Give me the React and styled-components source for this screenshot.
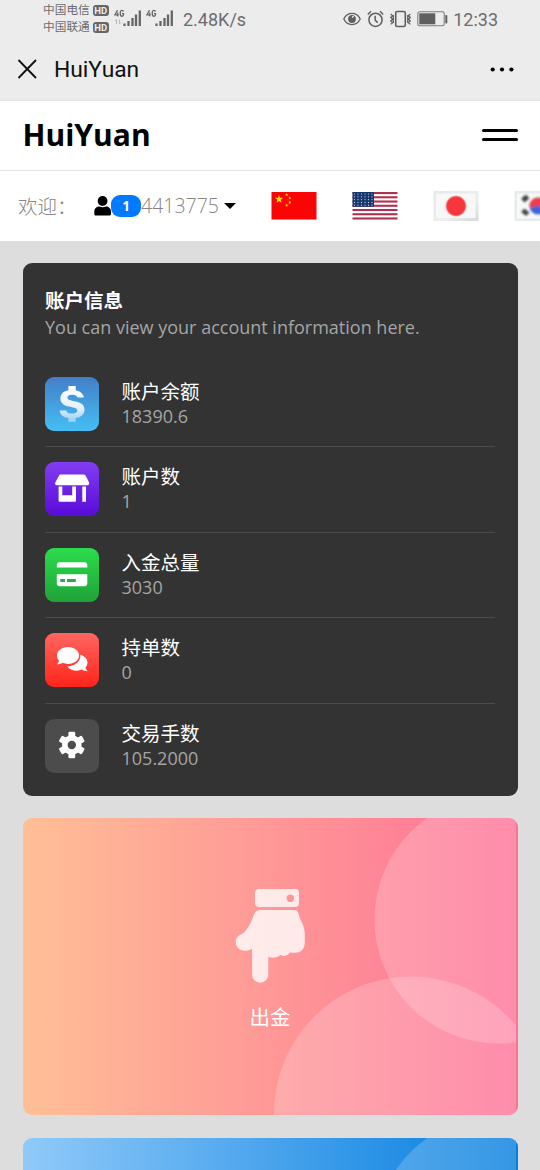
import React from 'react';
import styled, { createGlobalStyle } from 'styled-components';

const GlobalStyle = createGlobalStyle`
  * { box-sizing: border-box; }
  html, body { margin: 0; background: #ddd; }
  body {
    height: 1170px;
    overflow: hidden;
    font-family: "Noto Sans", "Open Sans", "Noto Sans CJK SC", sans-serif;
  }
  svg { display: block; flex: none; }
`;

const Page = styled.div`
  width: 540px;
  height: 1170px;
  overflow: hidden;
  background: #ddd;
`;

const StatusBar = styled.div`
  display: flex;
  align-items: center;
  height: 37px;
  padding: 1px 42px 0 43px;
  background: #ececec;
  color: #6c6c6c;
  font-family: Roboto, "Noto Sans CJK SC", sans-serif;
`;

const Carriers = styled.div`
  display: flex;
  flex-direction: column;
  width: 70px;
`;

const Carrier = styled.div`
  display: flex;
  align-items: center;
  gap: 3px;
  height: 17.5px;
  font-size: 11.7px;
  line-height: 17px;
  white-space: nowrap;
`;

const HdTag = styled.span`
  width: 16px;
  height: 11px;
  border-radius: 3px;
  background: #666;
  color: #ececec;
  font-size: 9.5px;
  font-weight: 700;
  line-height: 11px;
  text-align: center;
`;

const Signals = styled.div`
  display: flex;
  gap: 4px;
  margin-left: 1px;
`;

const Speed = styled.span`
  margin-left: 9px;
  font-size: 18px;
`;

const StatusRight = styled.div`
  display: flex;
  align-items: center;
  gap: 6px;
  margin-left: auto;
`;

const Clock = styled.span`
  margin-left: -1px;
  font-size: 18px;
`;

const TitleBar = styled.div`
  display: flex;
  align-items: center;
  height: 64px;
  padding: 2px 26px 0 17px;
  border-bottom: 1px solid #e6e6e6;
  background: #ececec;
  color: #111;
`;

const Title = styled.div`
  flex: 1;
  margin: 1px 0 0 16px;
  font: 400 22.8px/30px Roboto, sans-serif;
`;

const Header = styled.header`
  display: flex;
  align-items: center;
  justify-content: space-between;
  height: 70px;
  padding: 0 22.5px 2px 22.5px;
  border-bottom: 1.5px solid #e4e4e4;
  background: #fff;
`;

const Brand = styled.h1`
  margin: 0;
  color: #000;
  font: 700 30px/40px "Open Sans", "Noto Sans", sans-serif;
`;

const Burger = styled.div`
  display: flex;
  flex-direction: column;
  gap: 6px;
  width: 36px;
`;

const BurgerLine = styled.span`
  height: 3px;
  border-radius: 2px;
  background: #000;
`;

const WelcomeBar = styled.div`
  display: flex;
  align-items: center;
  height: 69.5px;
  padding-left: 18px;
  overflow: hidden;
  background: #fff;
`;

const Welcome = styled.span`
  width: 76px;
  flex: none;
  padding-top: 2px;
  color: #858585;
  font-size: 19.5px;
  font-weight: 300;
  line-height: 28px;
`;

const Badge = styled.span`
  display: block;
  flex: none;
  width: 30px;
  height: 22px;
  border-radius: 9px;
  background: #007bff;
  color: #fff;
  font: 700 13.5px/22px "Open Sans", sans-serif;
  text-align: center;
`;

const AccountId = styled.span`
  color: #858585;
  font-family: "Open Sans", sans-serif;
  font-size: 19.5px;
  font-weight: 300;
  line-height: 28px;
  width: 78px;
`;

const Caret = styled.span`
  margin-left: 5px;
  border: 6px solid transparent;
  border-top-color: #000;
  border-bottom: 0;
`;

const Flags = styled.div`
  display: flex;
  align-items: center;
  gap: 35px;
  margin-left: 35px;
`;

const Main = styled.main`
  display: flex;
  flex-direction: column;
  gap: 22.5px;
  padding: 22.5px;
`;

const InfoCard = styled.section`
  flex: none;
  height: 532.5px;
  padding: 24px 22.5px 0;
  border-radius: 9px;
  background: #333;
`;

const CardTitle = styled.h2`
  margin: 0;
  color: #fff;
  font-size: 19.5px;
  font-weight: 700;
  line-height: 27px;
`;

const CardNote = styled.p`
  margin: 0 0 21.5px;
  color: #a5a5a5;
  font-family: "Open Sans", sans-serif;
  font-size: 18px;
  line-height: 26px;
  white-space: nowrap;
`;

const Row = styled.div`
  display: flex;
  align-items: center;
  gap: 22.5px;
  height: 85.5px;
  border-bottom: 1.5px solid #4b4b4b;
  &:last-child { border-bottom-color: transparent; }
`;

const IconBox = styled.div`
  width: 54px;
  height: 54px;
  flex: none;
  border-radius: 9px;
  background: ${(p) => p.$fill};
`;

const RowText = styled.div`
  padding-bottom: 1px;
`;

const RowLabel = styled.div`
  color: #fff;
  font-size: 19.5px;
  line-height: 25px;
`;

const RowValue = styled.div`
  color: #a5a5a5;
  font-family: "Open Sans", sans-serif;
  font-size: 18px;
  line-height: 24px;
`;

const ActionCard = styled.section`
  position: relative;
  flex: none;
  display: flex;
  flex-direction: column;
  align-items: center;
  height: 297px;
  padding-top: 70px;
  overflow: hidden;
  border-radius: 9px;
  background: ${(p) => p.$fill};
`;

const Circles = styled.svg`
  position: absolute;
  top: 0;
  right: 1.5px;
`;

const ActionLabel = styled.div`
  margin-top: 17px;
  color: #fff;
  font-size: 20.5px;
  line-height: 30px;
`;

const Signal = ({ data }) => (
  <svg width="28" height="20" viewBox="0 0 28 20">
    <path d="M3.5 1.2 1 5.8h3.7M3.7 3.6v4M9.5 2.5C9 .9 6.5.9 6.3 3v2.5c0 2.3 3.2 2.3 3.2 0V4.6H8" fill="none" stroke="#666" strokeWidth="1.3" />
    {data && <path d="M2.5 15v-4.500L1 12M5.500 10.500V15L7 13.500" fill="none" stroke="#bbb" />}
    <path d="M10.500 14.500V17M14.500 12v5M18.500 9v8M22 5.500V17M25.800 1.500V17" stroke="#666" strokeWidth="2.3" />
  </svg>
);

const Eye = () => (
  <svg width="18" height="14" viewBox="0 0 18 14" fill="none" stroke="#5f5f5f" strokeWidth="1.3">
    <path d="M.8 7C4.300-.4 13.700-.4 17.200 7 13.700 14.400 4.300 14.400.8 7Z" />
    <circle cx="9" cy="7" r="3.900" fill="#5f5f5f" stroke="none" />
    <path d="M9 5.600 10.800 4" stroke="#ececec" />
  </svg>
);

const Alarm = () => (
  <svg width="17" height="18" viewBox="0 0 17 18" fill="none" stroke="#5f5f5f" strokeWidth="1.5">
    <circle cx="8.500" cy="9.800" r="6.600" />
    <path d="M8.200 5.800v4.400l2.500 2.400M.8 4.500 4 1.300M16.200 4.500 13 1.300" />
  </svg>
);

const Vibrate = () => (
  <svg width="21" height="18" viewBox="0 0 21 18" fill="none" stroke="#5f5f5f" strokeWidth="1.6">
    <rect x="5.700" y="1.500" width="9.600" height="15" rx="1.500" />
    <path d="m.7 4 2 1.700-2 1.800 2 1.700-2 1.800 2 1.700-2 1.700M20.300 4l-2 1.700 2 1.800-2 1.700 2 1.800-2 1.700 2 1.700M3.300 5v8M17.700 5v8" strokeWidth="1.2" />
  </svg>
);

const Battery = () => (
  <svg width="31" height="16" viewBox="0 0 31 16">
    <rect x=".8" y=".8" width="26.400" height="14" rx="1.800" fill="none" stroke="#7c7c7c" strokeWidth="1.1" />
    <rect x="2.300" y="2.300" width="16" height="11" fill="#5f5f5f" />
    <rect x="28.300" y="4" width="2" height="8.500" rx=".8" fill="#5f5f5f" />
  </svg>
);

const Close = () => (
  <svg width="21" height="21" viewBox="0 0 21 21" stroke="#111" strokeWidth="1.8">
    <path d="m1.500 1 17.500 18M19 1l-17.500 18" />
  </svg>
);

const More = () => (
  <svg width="24" height="6" viewBox="0 0 24 6">
    <circle cx="2.700" cy="2.500" r="2.100" /><circle cx="12" cy="2.500" r="2.100" /><circle cx="21.400" cy="2.500" r="2.100" />
  </svg>
);

const Person = () => (
  <svg width="17" height="20" viewBox="0 0 17 20">
    <circle cx="8.600" cy="5" r="4.900" />
    <path d="M5.500 10.600c2 1 4.300 1 6.300 0 3 0 5.200 2 5.200 5v2.400c0 .9-.6 1.500-1.500 1.500h-14C.9 19.500.3 18.900.3 18v-2.400c0-3 2.200-5 5.200-5Z" />
  </svg>
);

const STAR = 'M0-1 .225-.309.951-.309.363.118.588.809 0 .382-.588.809-.363.118-.951-.309-.225-.309Z';

const China = () => (
  <svg width="46" height="30" viewBox="0 0 46 30">
    <rect x=".5" y="1" width="45" height="27.500" fill="#f90505" />
    <g fill="#ffde00">
      <path d={STAR} transform="translate(8 8.200) scale(4.400)" />
      <path d={STAR} transform="translate(15.700 3.800) scale(1.900)" />
      <path d={STAR} transform="translate(18.800 7) scale(1.900)" />
      <path d={STAR} transform="translate(18.800 11.400) scale(1.900)" />
      <path d={STAR} transform="translate(15.700 14.300) scale(1.900)" />
    </g>
  </svg>
);

const Usa = () => (
  <svg width="46" height="30" viewBox="0 0 46 30">
    <rect x=".5" y="1" width="45" height="27.500" fill="#fff" />
    {[0, 1, 2, 3, 4, 5, 6].map((i) => (
      <rect key={i} x=".5" y={1 + i * 4.24} width="45" height="2.1" fill="#b0304f" />
    ))}
    <rect x=".5" y="1" width="21.500" height="14.800" fill="#17376f" />
    {[0, 1, 2, 3, 4].map((r) =>
      [0, 1, 2, 3, 4, 5].map((c) => (
        <circle key={`${r}-${c}`} cx={2.5 + c * 3.5} cy={3 + r * 2.8} r=".6" fill="#cbd5e8" />
      ))
    )}
  </svg>
);

const Japan = () => (
  <svg width="46" height="30" viewBox="0 0 46 30">
    <defs>
      <linearGradient id="paper" x2="1" y2="1"><stop stopColor="#e3e8e8" /><stop offset=".6" stopColor="#eee" /><stop offset="1" stopColor="#d6d9d9" /></linearGradient>
      <radialGradient id="sun"><stop offset=".8" stopColor="#f8373c" /><stop offset="1" stopColor="#f8373c" stopOpacity="0" /></radialGradient>
    </defs>
    <rect x=".5" width="45" height="30" fill="url(#paper)" />
    <rect x="3" y="2.500" width="39.500" height="24.500" fill="#f8f8f8" />
    <circle cx="23" cy="15" r="11" fill="url(#sun)" />
  </svg>
);

const Korea = () => (
  <svg width="46" height="30" viewBox="0 0 46 30">
    <defs><filter id="soft"><feGaussianBlur stdDeviation="1" /></filter></defs>
    <rect x=".5" width="45" height="30" fill="#e6ebeb" />
    <rect x="3" y="2.500" width="40" height="25" fill="#f9f9f9" />
    <g filter="url(#soft)">
      <path d="m8 8.500 5-4M9.500 10.500l5-4M8 20l5 4M9.500 18.500l5 4" stroke="#444" strokeWidth="2.800" />
      <circle cx="24" cy="15" r="8.600" fill="#3f63d8" />
      <path d="M15.400 15a8.600 8.600 0 0 1 17.200 0c-2 3-6 3-8.300 0s-6 5-8.900 0Z" fill="#ee3c46" />
    </g>
  </svg>
);

const Dollar = () => (
  <svg width="54" height="54" viewBox="0 0 54 54">
    <defs><linearGradient id="coin" x2="0" y2="1"><stop stopColor="#fff" /><stop offset=".6" stopColor="#e4f0fd" /><stop offset="1" stopColor="#93cdf6" /></linearGradient></defs>
    <path d="M23.400 9h7.300v4.200c4.300.8 7.500 3.300 8.100 7.200h-6.400c-.7-1.800-2.400-2.700-5.200-2.700-3 0-4.800 1.100-4.800 2.900 0 1.700 1.400 2.400 4.600 3.100l3.600.8c6 1.200 8.900 3.600 8.900 8.200 0 4.500-3.200 7.600-8.800 8.400V45h-7.300v-3.900c-5-.7-8.200-3.400-8.700-7.700h6.600c.6 2.100 2.600 3.200 5.600 3.200 3.300 0 5.400-1.200 5.400-3.100 0-1.600-1.300-2.400-4.200-3l-4-.9c-5.700-1.200-8.700-3.800-8.700-8.200 0-4.300 3-7.300 8-8.200Z" fill="url(#coin)" />
  </svg>
);

const Store = () => (
  <svg width="54" height="54" viewBox="0 0 54 54" fill="#fff">
    <path d="M16 12.500h22.500c1 0 1.700.4 2.200 1.200l3.200 6.300c.9 2 0 3.200-1.800 3.200H12c-1.800 0-2.400-1.400-1.600-3l3.400-6.300c.5-1 1.200-1.400 2.200-1.400Z" />
    <path d="M13.600 24.500h3.700v8.800h9.900v-8.800H31v13.800c0 1-.6 1.500-1.500 1.500H15.200c-1 0-1.600-.5-1.600-1.500ZM37.300 24.500H41v15.300h-3.700Z" />
  </svg>
);

const CreditCard = () => (
  <svg width="54" height="54" viewBox="0 0 54 54">
    <path d="M11.800 19.500v-2.200a3 3 0 0 1 3-3h24.500a3 3 0 0 1 3 3v2.200ZM11.800 26.200h30.500v9a3 3 0 0 1-3 3H14.800a3 3 0 0 1-3-3Z" fill="#fff" />
    <path d="M15.300 31H20v3h-4.700ZM22 31h8.800v3H22Z" fill="#25ae43" />
  </svg>
);

const Chat = () => (
  <svg width="54" height="54" viewBox="0 0 54 54" fill="#fff">
    <path d="M23 14c6.200 0 11 3.600 11 8.400s-4.800 8.500-11 8.500c-2 0-3.800-.4-5.400-1.100-1.600 1-3.500 1.700-5.600 1.700.9-1.100 1.700-2.500 2-4-1.300-1.400-2-3.200-2-5.100C12 17.600 16.800 14 23 14Z" />
    <path d="M35.300 21.800c4.200 1.100 7.200 4.200 7.200 7.800 0 1.900-.7 3.500-2 4.900.4 1.600 1.200 2.800 2.100 3.800-2.200 0-4.200-.7-5.600-1.700-1.500.7-3.300 1.100-5.200 1.100-4.100 0-7.700-1.700-9.500-4.200 7-.1 12.500-4.300 13.100-9.900.1-.7.100-1.200-.1-1.800Z" />
  </svg>
);

const TOOTH_ANGLES = [0, 60, 120];

const Gear = () => (
  <svg width="54" height="54" viewBox="0 0 54 54">
    <g fill="#fff" transform="translate(26.800 26)">
      {TOOTH_ANGLES.map((angle) => (
        <rect key={angle} x="-3.400" y="-13.200" width="6.800" height="26.400" rx="1.200" transform={`rotate(${angle})`} />
      ))}
      <circle r="9.800" />
      <circle r="4.200" fill="#4c4c4c" />
    </g>
  </svg>
);

const Hand = () => (
  <svg width="72" height="97" viewBox="0 0 72 97" fill="#fff" fillOpacity=".8">
    <path d="M25 1h36a4 4 0 0 1 4 4V15a4 4 0 0 1-4 4H25a4 4 0 0 1-4-4V5a4 4 0 0 1 4-4Zm31.300 5.500a3.700 3.700 0 1 0 0 7.400 3.700 3.700 0 0 0 0-7.400Z" fillRule="evenodd" />
    <path d="M26 22h34.500c2.300 0 3.500 1.200 4 3.500 1 4.500 3.100 8 4.500 11.500 1.300 3.500 1.800 6 1.800 10.500v7c0 6.500-4 10.500-10 10.300-2.300 0-3-.1-4-.9-3.200 3.800-7.600 5-10.500 3.200-3 3-7.200 3.300-12 2v17.500a8 8 0 0 1-16.200 0V60.500c-3 2.500-8 3-12.200 1C.500 58.500-.300 49 7.300 46.500c4-2 8.500-8.500 12-18.200l1.500-3.300C21.900 22.900 23.700 22 26 22Z" />
  </svg>
);

const CardCircles = () => (
  <Circles width="494" height="297" viewBox="0 0 494 297" fill="#fff" fillOpacity=".2">
    <circle cx="476.500" cy="101.500" r="124" />
    <circle cx="389" cy="295.500" r="137" />
  </Circles>
);

const rows = [
  { label: '账户余额', value: '18390.6', fill: 'linear-gradient(#437ec9, #45bff3)', Icon: Dollar },
  { label: '账户数', value: '1', fill: 'linear-gradient(#813df2, #5a0bd8)', Icon: Store },
  { label: '入金总量', value: '3030', fill: 'linear-gradient(#2ddc4d, #1fa238)', Icon: CreditCard },
  { label: '持单数', value: '0', fill: 'linear-gradient(#ff6661, #ff2419)', Icon: Chat },
  { label: '交易手数', value: '105.2000', fill: '#4c4c4c', Icon: Gear },
];

export default function App() {
  return (
    <Page>
      <GlobalStyle />
      <StatusBar>
        <Carriers>
          <Carrier>中国电信<HdTag>HD</HdTag></Carrier>
          <Carrier>中国联通<HdTag>HD</HdTag></Carrier>
        </Carriers>
        <Signals><Signal data /><Signal /></Signals>
        <Speed>2.48K/s</Speed>
        <StatusRight>
          <Eye /><Alarm /><Vibrate /><Battery />
          <Clock>12:33</Clock>
        </StatusRight>
      </StatusBar>
      <TitleBar>
        <Close />
        <Title>HuiYuan</Title>
        <More />
      </TitleBar>
      <Header>
        <Brand>HuiYuan</Brand>
        <Burger><BurgerLine /><BurgerLine /></Burger>
      </Header>
      <WelcomeBar>
        <Welcome>欢迎：</Welcome>
        <Person />
        <Badge>1</Badge>
        <AccountId>4413775</AccountId>
        <Caret />
        <Flags><China /><Usa /><Japan /><Korea /></Flags>
      </WelcomeBar>
      <Main>
        <InfoCard>
          <CardTitle>账户信息</CardTitle>
          <CardNote>You can view your account information here.</CardNote>
          {rows.map(({ label, value, fill, Icon }) => (
            <Row key={label}>
              <IconBox $fill={fill}><Icon /></IconBox>
              <RowText>
                <RowLabel>{label}</RowLabel>
                <RowValue>{value}</RowValue>
              </RowText>
            </Row>
          ))}
        </InfoCard>
        <ActionCard $fill="linear-gradient(to right, #ffbf96, #fe7096)">
          <CardCircles />
          <Hand />
          <ActionLabel>出金</ActionLabel>
        </ActionCard>
        <ActionCard $fill="linear-gradient(to right, #90caf9, #047edf 99%)">
          <CardCircles />
        </ActionCard>
      </Main>
    </Page>
  );
}
